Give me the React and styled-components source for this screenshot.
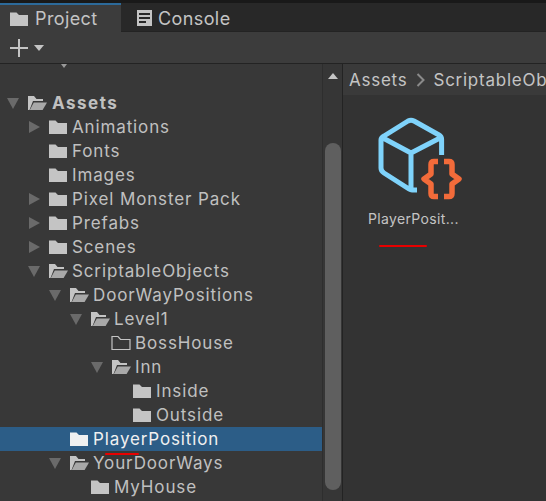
import styled, { createGlobalStyle } from "styled-components";

const GlobalStyle = createGlobalStyle`
  html, body {
    margin: 0;
    padding: 0;
    background: #383838;
  }
`;

const Window = styled.div`
  width: 546px;
  height: 501px;
  overflow: hidden;
  display: flex;
  flex-direction: column;
  font-family: Inter, "Liberation Sans", sans-serif;
  color: #c4c4c4;
  background: #383838;
`;

const TabBar = styled.div`
  height: 32px;
  flex: none;
  display: flex;
  background: #282828;
  border-top: 3px solid #191919;
  box-sizing: border-box;
  border-bottom: 1px solid #232323;
`;

const Tab = styled.div`
  width: ${(p) => p.$width}px;
  box-sizing: border-box;
  display: flex;
  align-items: center;
  gap: 6px;
  padding-left: ${(p) => p.$pad}px;
  font-size: 18px;
  letter-spacing: 0.4px;
  background: ${(p) => (p.$active ? "#3c3c3c" : "transparent")};
  margin-bottom: ${(p) => (p.$active ? "-1px" : "0")};
  border-top: 2px solid ${(p) => (p.$active ? "#2c6a9a" : "transparent")};
`;

const Toolbar = styled.div`
  height: 32px;
  flex: none;
  box-sizing: border-box;
  display: flex;
  align-items: center;
  gap: 6px;
  padding-left: 10px;
  background: #3c3c3c;
  border-bottom: 1px solid #232323;
`;

const Panels = styled.div`
  flex: 1;
  min-height: 0;
  display: flex;
`;

const TreePanel = styled.div`
  width: 322px;
  flex: none;
  overflow: hidden;
  background: #383838;
`;

const ClippedRow = styled.div`
  height: 27px;
  padding-left: 60px;
  overflow: hidden;
`;

const Row = styled.div`
  position: relative;
  height: 24px;
  display: flex;
  align-items: center;
  padding-left: ${(p) => 6 + p.$level * 21}px;
  font-size: 17px;
  font-weight: ${(p) => (p.$bold ? 700 : 400)};
  letter-spacing: ${(p) => (p.$bold ? "1.5px" : "0.87px")};
  white-space: nowrap;
  background: ${(p) => (p.$selected ? "#2c5d87" : "transparent")};
  color: ${(p) => (p.$selected ? "#f0f0f0" : "#c0c0c0")};
`;

const ArrowSlot = styled.span`
  width: 21px;
  flex: none;
  display: flex;
  align-items: center;
`;

const FolderSlot = styled.span`
  width: ${(p) => (p.$wide ? 25 : 24)}px;
  flex: none;
  display: flex;
  align-items: center;
`;

const Scrollbar = styled.div`
  width: 21px;
  flex: none;
  box-sizing: border-box;
  padding-left: 1px;
  background: #363636;
  border-left: 1px solid #2e2e2e;
  border-right: 1px solid #232323;
  display: flex;
  flex-direction: column;
  align-items: center;
`;

const ScrollUp = styled.div`
  margin-top: 9px;
  width: 0;
  height: 0;
  border-left: 5px solid transparent;
  border-right: 5px solid transparent;
  border-bottom: 6px solid #c4c4c4;
`;

const ScrollThumb = styled.div`
  margin-top: 64px;
  width: 16px;
  height: 347px;
  border-radius: 8px;
  background: #5f5f5f;
`;

const AssetPanel = styled.div`
  flex: 1;
  min-width: 0;
  display: flex;
  flex-direction: column;
  background: #333333;
`;

const Breadcrumb = styled.div`
  height: 31px;
  flex: none;
  display: flex;
  align-items: center;
  gap: 8px;
  padding-left: 6px;
  background: #3a3a3a;
  font-size: 17px;
  letter-spacing: 0.75px;
  white-space: nowrap;
  overflow: hidden;
`;

const Chevron = styled.svg`
  flex: none;
  margin-left: 1px;
`;

const AssetGrid = styled.div`
  position: relative;
  flex: 1;
  padding: 21px 0 0 25px;
`;

const AssetTile = styled.div`
  width: 92px;
  display: flex;
  flex-direction: column;
  align-items: flex-start;
`;

const AssetIcon = styled.svg`
  display: block;
  margin-left: 10px;
`;

const AssetLabel = styled.div`
  margin-top: 10px;
  font-size: 14px;
  letter-spacing: 0.35px;
  line-height: 18px;
  white-space: nowrap;
`;

const RedMark = styled.div`
  position: absolute;
  left: ${(p) => p.$left}px;
  top: ${(p) => p.$top}px;
  width: ${(p) => p.$width}px;
  height: 2px;
  border-radius: 1px;
  background: #e80000;
`;

function ClosedFolder({ color = "#c4c4c4" }) {
  return (
    <svg width="20" height="16" viewBox="0 0 20 16">
      <path d="M1 1.500h6.500l2.500 2.500h9v11H1z" fill={color} />
    </svg>
  );
}

function OutlineFolder() {
  return (
    <svg width="20" height="16" viewBox="0 0 20 16">
      <path d="M1 1.500h6l2.500 3h9.500v10H1z" fill="none" stroke="#c4c4c4" strokeWidth="1.2" />
    </svg>
  );
}

function OpenFolder() {
  return (
    <svg width="20" height="16" viewBox="0 0 20 16">
      <path d="M1 15V1h6l2.500 3H16v2H6L2.500 15z" fill="#c4c4c4" />
      <path d="M6.800 7.500H20L15.600 15H2.800z" fill="#a8a8a8" />
    </svg>
  );
}

function Arrow({ open }) {
  return (
    <svg width="14" height="14" viewBox="0 0 14 14">
      {open ? <path d="M1 2h12L7 13z" fill="#6a6a6a" /> : <path d="M2 1l11 6L2 13z" fill="#6a6a6a" />}
    </svg>
  );
}

function ConsoleIcon() {
  return (
    <svg width="15" height="16" viewBox="0 0 15 16">
      <path
        fillRule="evenodd"
        d="M0 0h15v16H0zM2 3v2h11V3zM2 7v2h11V7zM2 11v2h7v-2z"
        fill="#c4c4c4"
      />
    </svg>
  );
}

function CubeBraces() {
  return (
    <AssetIcon width="84" height="84" viewBox="0 0 84 84" fill="none" strokeLinejoin="round" strokeLinecap="butt">
      <path
        d="M39 74H34Q32.500 74 31 73L6 57Q3 55 3 52V24Q3 21.500 6 20L30 5Q33 3.500 36 5L61 19Q63.600 20.500 63.600 23.500V39M5 22L33 37L62 22M33 37V72"
        stroke="#7fd3fb"
        strokeWidth="5"
      />
      <path
        d="M60 45.500H56Q53 45.500 53 48.500V58L46 63L53 68V77.500Q53 80.500 56 80.500H60"
        stroke="#f26b3a"
        strokeWidth="5.500"
      />
      <path
        d="M66 45.500H71Q74 45.500 74 48.500V58L81 63L74 68V77.500Q74 80.500 71 80.500H66"
        stroke="#f26b3a"
        strokeWidth="5.500"
      />
    </AssetIcon>
  );
}

const rows = [
  { name: "Assets", level: 0, arrow: "open", folder: "open", bold: true },
  { name: "Animations", level: 1, arrow: "closed" },
  { name: "Fonts", level: 1 },
  { name: "Images", level: 1 },
  { name: "Pixel Monster Pack", level: 1, arrow: "closed" },
  { name: "Prefabs", level: 1, arrow: "closed" },
  { name: "Scenes", level: 1, arrow: "closed" },
  { name: "ScriptableObjects", level: 1, arrow: "open", folder: "open" },
  { name: "DoorWayPositions", level: 2, arrow: "open", folder: "open" },
  { name: "Level1", level: 3, arrow: "open", folder: "open" },
  { name: "BossHouse", level: 4, folder: "outline" },
  { name: "Inn", level: 4, arrow: "open", folder: "open" },
  { name: "Inside", level: 5 },
  { name: "Outside", level: 5 },
  { name: "PlayerPosition", level: 2, selected: true },
  { name: "YourDoorWays", level: 2, arrow: "open", folder: "open" },
  { name: "MyHouse", level: 3 },
];

function FolderIcon({ kind, selected }) {
  if (kind === "open") return <OpenFolder />;
  if (kind === "outline") return <OutlineFolder />;
  return <ClosedFolder color={selected ? "#f0f0f0" : "#c4c4c4"} />;
}

export default function App() {
  return (
    <>
      <GlobalStyle />
      <Window>
        <TabBar>
          <Tab $active $width={121} $pad={9}>
            <ClosedFolder />
            Project
          </Tab>
          <Tab $width={150} $pad={16}>
            <ConsoleIcon />
            Console
          </Tab>
        </TabBar>
        <Toolbar>
          <svg width="18" height="18" viewBox="0 0 18 18">
            <path d="M9 0v18M0 9h18" stroke="#c4c4c4" strokeWidth="2" />
          </svg>
          <svg width="10" height="6" viewBox="0 0 10 6">
            <path d="M0 0h10L5 6z" fill="#c4c4c4" />
          </svg>
        </Toolbar>
        <Panels>
          <TreePanel>
            <ClippedRow>
              <svg width="8" height="4" viewBox="0 0 8 4" style={{ display: "block" }}>
                <path d="M1 0h6L4 4z" fill="#9a9a9a" />
              </svg>
            </ClippedRow>
            {rows.map((row) => (
              <Row key={row.name} $level={row.level} $bold={row.bold} $selected={row.selected}>
                <ArrowSlot>{row.arrow && <Arrow open={row.arrow === "open"} />}</ArrowSlot>
                <FolderSlot $wide={row.bold}>
                  <FolderIcon kind={row.folder} selected={row.selected} />
                </FolderSlot>
                {row.name}
                {row.selected && <RedMark $left={105} $top={26} $width={34} />}
              </Row>
            ))}
          </TreePanel>
          <Scrollbar>
            <ScrollUp />
            <ScrollThumb />
          </Scrollbar>
          <AssetPanel>
            <Breadcrumb>
              <span>Assets</span>
              <Chevron width="9" height="14" viewBox="0 0 9 14">
                <path d="M1.500 1l6 6-6 6" fill="none" stroke="#8a8a8a" strokeWidth="2" />
              </Chevron>
              <span>ScriptableObjects</span>
            </Breadcrumb>
            <AssetGrid>
              <AssetTile>
                <CubeBraces />
                <AssetLabel>PlayerPosit...</AssetLabel>
              </AssetTile>
              <RedMark $left={36} $top={150} $width={48} />
            </AssetGrid>
          </AssetPanel>
        </Panels>
      </Window>
    </>
  );
}
